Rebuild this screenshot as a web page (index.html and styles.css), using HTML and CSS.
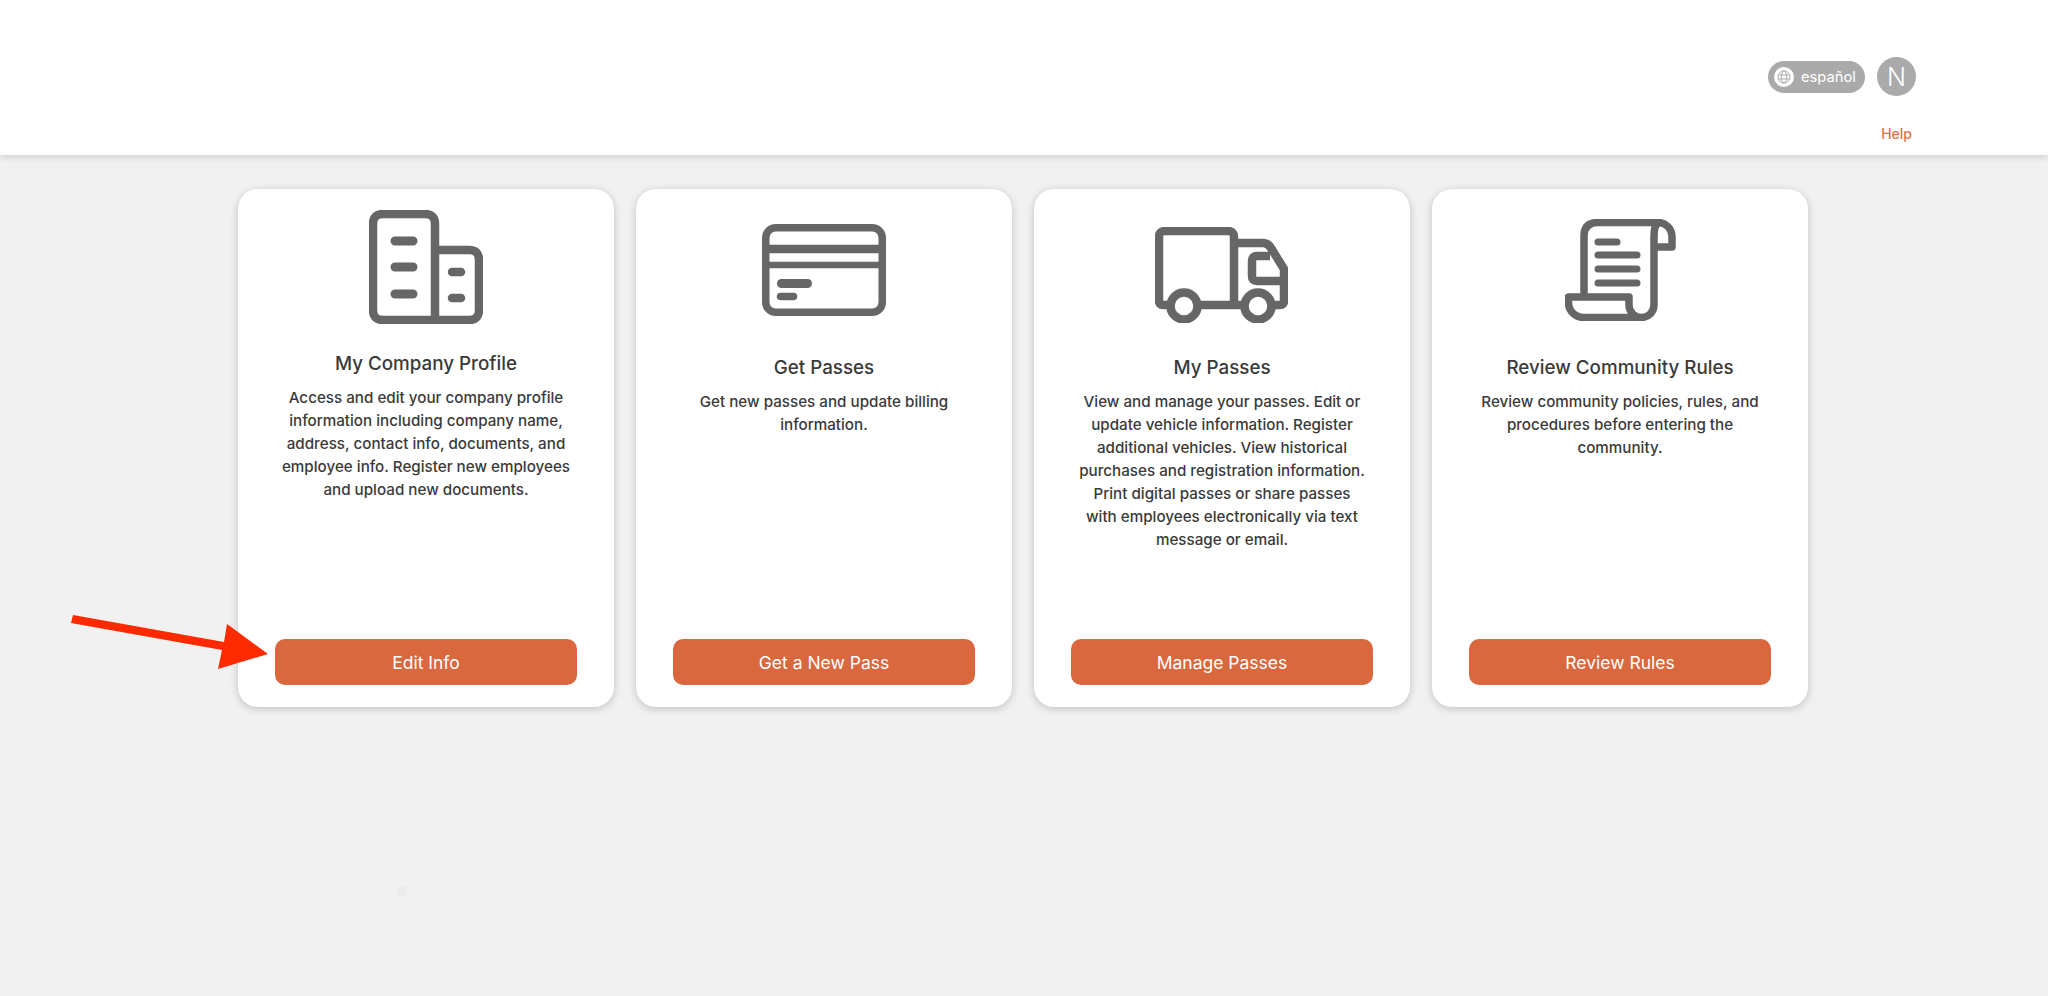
FILE: index.html
```html
<!DOCTYPE html>
<html lang="en">
<head>
    <meta charset="UTF-8">
    <meta name="viewport" content="width=device-width, initial-scale=1.0">
    <title>Company Portal</title>
    <link rel="stylesheet" href="styles.css">
</head>
<body>
    <header class="header">
        <div class="header-top">
            <button class="lang-btn" type="button">
                <span class="lang-icon">
                    <svg width="14" height="14" viewBox="0 0 14 14" fill="none" stroke="#aaa" stroke-width="1">
                        <circle cx="7" cy="7" r="6"/>
                        <ellipse cx="7" cy="7" rx="2.6" ry="6"/>
                        <path d="M1.4 5H12.6M1.4 9H12.6"/>
                    </svg>
                </span>
                español
            </button>
            <div class="avatar">N</div>
        </div>
        <a class="help-link" href="#">Help</a>
    </header>

    <main class="cards">
        <section class="card card-tall-icon">
            <div class="card-icon">
                <svg class="icon-building" width="114" height="114" viewBox="0 0 114 114" fill="none" stroke="#666" stroke-width="8.5" stroke-linecap="round">
                    <path d="M66 40H100Q110 40 110 50V100Q110 110 100 110H14Q4 110 4 100V14Q4 4 14 4H56Q66 4 66 14V110"/>
                    <path stroke-width="9" d="M26 31H44M26 57H44M26 84H44"/>
                    <path d="M83 62H92M83 88H92"/>
                </svg>
            </div>
            <h2>My Company Profile</h2>
            <p>Access and edit your company profile information including company name, address, contact info, documents, and employee info. Register new employees and upload new documents.</p>
            <a class="card-btn" href="#">Edit Info</a>
        </section>

        <section class="card">
            <div class="card-icon">
                <svg width="124" height="92" viewBox="0 0 124 92" fill="none" stroke="#666" stroke-width="7.5" stroke-linecap="round">
                    <rect x="3.75" y="3.75" width="116.5" height="84.5" rx="10"/>
                    <path stroke-width="8.5" stroke-linecap="butt" d="M4 25H120"/>
                    <path stroke-width="6.5" stroke-linecap="butt" d="M4 41H120"/>
                    <path stroke-width="9" d="M19.5 59.5H45.5"/>
                    <path d="M18.5 72.5H31.5"/>
                </svg>
            </div>
            <h2>Get Passes</h2>
            <p>Get new passes and update billing information.</p>
            <a class="card-btn" href="#">Get a New Pass</a>
        </section>

        <section class="card">
            <div class="card-icon">
                <svg class="icon-truck" width="133" height="96" viewBox="0 0 133 96" fill="none" stroke="#666" stroke-width="8.5" stroke-linejoin="round">
                    <path d="M79 78H8Q4 78 4 74V10Q4 4 10 4H73Q79 4 79 10V78"/>
                    <path d="M79 16H108Q113 16 116 21L129 42V74Q129 78 125 78H79"/>
                    <path d="M115 29H102Q97 29 97 34V49Q97 54 102 54H128"/>
                    <circle cx="29" cy="79" r="13.5" fill="#fff"/>
                    <circle cx="103" cy="79" r="13.5" fill="#fff"/>
                </svg>
            </div>
            <h2>My Passes</h2>
            <p>View and manage your passes. Edit or update vehicle information. Register additional vehicles. View historical purchases and registration information. Print digital passes or share passes with employees electronically via text message or email.</p>
            <a class="card-btn" href="#">Manage Passes</a>
        </section>

        <section class="card">
            <div class="card-icon">
                <svg width="111" height="102" viewBox="0 0 111 102" fill="none" stroke="#666" stroke-width="7.5" stroke-linejoin="round">
                    <path d="M19 78V17Q19 3.5 33 3.5H93A14 14 0 0 1 107 17V28H89"/>
                    <path d="M93 3.5C90 6 89 12 89 17V86A12.5 12.5 0 0 1 64 86V78H3.5V84A15 15 0 0 0 18.5 98.5H76"/>
                    <path stroke-width="7" stroke-linecap="round" d="M33 23H52M33 36H72M33 50H72M33 64H72"/>
                </svg>
            </div>
            <h2>Review Community Rules</h2>
            <p>Review community policies, rules, and procedures before entering the community.</p>
            <a class="card-btn" href="#">Review Rules</a>
        </section>
    </main>

    <!-- annotation arrow on top of the screenshot -->
    <svg class="arrow" width="200" height="60" viewBox="0 0 200 60">
        <path fill="#ff2a00" d="M2 0L153 27L156 9L197 39L147 54L151 35L0 8Z"/>
    </svg>
    <div class="stray-dot"></div>
</body>
</html>
```

FILE: styles.css
```css
* {
    box-sizing: border-box;
}
body {
    margin: 0;
    min-height: 996px;
    font-family: Inter, "Liberation Sans", sans-serif;
    background-color: #f1f1f1;
    color: #3a3a3a;
}
.header {
    height: 155px;
    padding: 57px 132px 0 0;
    display: flex;
    flex-direction: column;
    align-items: flex-end;
    background: white;
    box-shadow: 0 3px 6px rgba(0,0,0,0.12);
}
.header-top {
    display: flex;
    align-items: center;
    gap: 12px;
}
.lang-btn {
    width: 97px;
    height: 32px;
    padding: 0 0 0 6px;
    display: flex;
    align-items: center;
    gap: 7px;
    border: none;
    border-radius: 16px;
    background-color: #aaa;
    color: white;
    font-family: Inter, "Liberation Sans", sans-serif;
    font-size: 14.7px;
}
.lang-icon {
    width: 20px;
    height: 20px;
    display: flex;
    align-items: center;
    justify-content: center;
    border-radius: 50%;
    background: white;
}
.avatar {
    width: 39px;
    height: 39px;
    display: flex;
    align-items: center;
    justify-content: center;
    border-radius: 50%;
    background-color: #aaa;
    color: white;
    font-size: 25px;
    font-weight: 300;
}
.help-link {
    margin: 29px 4px 0 0;
    color: #e0714c;
    font-size: 14px;
    font-weight: 500;
    text-decoration: none;
}
.cards {
    display: flex;
    justify-content: center;
    gap: 22px;
    padding: 34px 2px 0 0;
}
.card {
    width: 376px;
    height: 518px;
    padding: 15px 37px 22px;
    display: flex;
    flex-direction: column;
    align-items: center;
    text-align: center;
    background: white;
    border-radius: 20px;
    box-shadow: 0 2px 8px rgba(0,0,0,0.2);
}
.card-icon {
    height: 132px;
    flex-shrink: 0;
    display: flex;
    align-items: center;
    justify-content: center;
}
.card-tall-icon .card-icon {
    height: 128px;
}
.icon-building {
    margin-bottom: 2px;
}
.icon-truck {
    margin: 10px 2px 0 0;
}
.card h2 {
    margin: 18px 0 8px;
    font-size: 18.8px;
    line-height: 28px;
    font-weight: 500;
}
.card p {
    max-width: 290px;
    margin: 0;
    font-size: 15.2px;
    line-height: 23px;
    font-weight: 500;
}
.card-btn {
    width: 302px;
    height: 46px;
    margin-top: auto;
    padding-top: 1px;
    display: flex;
    align-items: center;
    justify-content: center;
    flex-shrink: 0;
    border-radius: 10px;
    background-color: #d9683f;
    color: white;
    font-size: 17.5px;
    text-decoration: none;
}
.arrow {
    position: absolute;
    left: 71px;
    top: 615px;
}
.stray-dot {
    position: absolute;
    left: 397px;
    top: 886px;
    width: 10px;
    height: 10px;
    border-radius: 50%;
    background-color: #ebebeb;
}
```
